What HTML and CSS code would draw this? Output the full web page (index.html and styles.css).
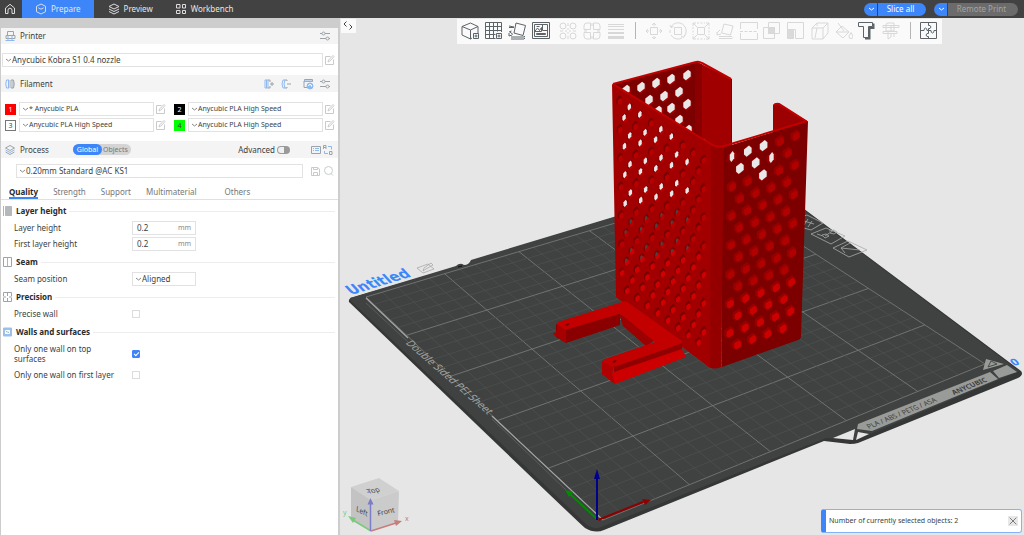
FILE: index.html
```html
<!DOCTYPE html>
<html lang="en">
<head>
    <meta charset="UTF-8">
    <meta name="viewport" content="width=device-width, initial-scale=1.0">
    <title>Untitled</title>
    <link rel="stylesheet" href="styles.css">
</head>
<body>

<header class="topbar">
    <nav class="nav">
        <a class="nav-item home" href="#home" aria-label="Home">
            <svg class="icon" viewBox="0 0 12 12"><path d="M1.500 5 6 1.300 10.500 5v5.500H8V7.200a2 2 0 0 0-4 0v3.300H1.500z"/></svg>
        </a>
        <a class="nav-item active" href="#prepare">
            <svg class="icon" viewBox="0 0 12 12"><path d="M6 1 10.500 3.300v5.400L6 11 1.500 8.700V3.300zM3.300 4.800 6 6.200l2.700-1.400"/></svg>
            Prepare
        </a>
        <a class="nav-item" href="#preview">
            <svg class="icon" viewBox="0 0 12 12"><path d="M6 1 11 3.500 6 6 1 3.500zM1 6l5 2.500L11 6M1 8.500 6 11l5-2.500"/></svg>
            Preview
        </a>
        <a class="nav-item" href="#workbench">
            <svg class="icon" viewBox="0 0 12 12"><path d="M1.500 1.500H5V5H1.500zM7.500 1.500h3V5h-3zM1.500 7.500H5v3H1.500zM7.500 7.500h3v3h-3z"/></svg>
            Workbench
        </a>
    </nav>
    <div class="actions">
        <div class="split">
            <button class="split-arrow" aria-label="Slice options"><svg class="chevron" viewBox="0 0 7 4"><path d="M1 1l2.500 2L6 1"/></svg></button>
            <button class="split-main">Slice all</button>
        </div>
        <div class="split">
            <button class="split-arrow" aria-label="Print options"><svg class="chevron" viewBox="0 0 7 4"><path d="M1 1l2.500 2L6 1"/></svg></button>
            <button class="split-main print" disabled>Remote Print</button>
        </div>
    </div>
</header>

<main class="main">
    <aside class="sidebar">
        <div class="strip"></div>

        <div class="bar first">
            <svg class="icon" viewBox="0 0 12 12"><path d="M3.500 5.500v-4h6v4M2 5.500h9v3H2z"/><path class="blue" d="M1.500 10.500h9M4 6v4M8 6v4"/></svg>
            <h2>Printer</h2>
            <span class="grow"></span>
            <button class="icon-btn" aria-label="Printer settings"><svg class="icon" viewBox="0 0 12 12"><path d="M1 3.500h2M6 3.500h5M1 8.500h6M10 8.500h1"/><circle cx="4.500" cy="3.500" r="1.500"/><circle cx="8.500" cy="8.500" r="1.500"/></svg></button>
        </div>

        <div class="row printer-row">
            <div class="combo wide">
                <svg class="chevron" viewBox="0 0 7 4"><path d="M1 1l2.500 2L6 1"/></svg>
                <select aria-label="Printer"><option>Anycubic Kobra S1 0.4 nozzle</option></select>
            </div>
            <button class="icon-btn" aria-label="Edit printer"><svg class="icon edit" viewBox="0 0 12 12"><path d="M9.500 5.500v5h-8v-8h5M4 8l.5-2L9 1.500 10 2.600 5.700 7.200z"/></svg></button>
        </div>

        <div class="bar">
            <svg class="icon" viewBox="0 0 12 12"><path class="blue" d="M4.500 2v8M2.500 2Q1 6 2.500 10H5V2z"/><path d="M7 2h2.500Q11 6 9.500 10H7zM9 2v8"/></svg>
            <h2>Filament</h2>
            <span class="grow"></span>
            <button class="icon-btn" aria-label="Add filament"><svg class="icon" viewBox="0 0 12 12"><path class="blue" d="M2 2h3v8H2zM3.500 2v8"/><path d="M5 2h2v2M5 10h2V8M7 6h4M9 4v4"/></svg></button>
            <button class="icon-btn" aria-label="Remove filament"><svg class="icon" viewBox="0 0 12 12"><path class="blue" d="M3 2Q1 6 3 10h2Q3 6 5 2z"/><path d="M5 2h2v1M5 10h2V9M7 6h4"/></svg></button>
            <button class="icon-btn sync" aria-label="Sync filament"><svg class="icon" viewBox="0 0 12 12"><path d="M1.500 3.500h9v-2h-8v2M2 4v5.500h3"/><path class="blue" d="M2 3h8"/><circle class="blue fill" cx="8" cy="8" r="3"/><path class="white" d="M6.500 8a1.500 1.500 0 0 1 3 0M9.500 7v1.500"/></svg></button>
            <button class="icon-btn" aria-label="Filament settings"><svg class="icon" viewBox="0 0 12 12"><path d="M1 3.500h2M6 3.500h5M1 8.500h6M10 8.500h1"/><circle cx="4.500" cy="3.500" r="1.500"/><circle cx="8.500" cy="8.500" r="1.500"/></svg></button>
        </div>

        <div class="filaments">
            <div class="filament">
                <span class="swatch red">1</span>
                <div class="combo"><svg class="chevron" viewBox="0 0 7 4"><path d="M1 1l2.500 2L6 1"/></svg><select aria-label="Filament 1"><option>* Anycubic PLA</option></select></div>
                <button class="icon-btn" aria-label="Edit filament 1"><svg class="icon edit" viewBox="0 0 12 12"><path d="M9.500 5.500v5h-8v-8h5M4 8l.5-2L9 1.500 10 2.600 5.700 7.200z"/></svg></button>
            </div>
            <div class="filament">
                <span class="swatch black">2</span>
                <div class="combo"><svg class="chevron" viewBox="0 0 7 4"><path d="M1 1l2.500 2L6 1"/></svg><select aria-label="Filament 2"><option>Anycubic PLA High Speed</option></select></div>
                <button class="icon-btn" aria-label="Edit filament 2"><svg class="icon edit" viewBox="0 0 12 12"><path d="M9.500 5.500v5h-8v-8h5M4 8l.5-2L9 1.500 10 2.600 5.700 7.200z"/></svg></button>
            </div>
            <div class="filament">
                <span class="swatch">3</span>
                <div class="combo"><svg class="chevron" viewBox="0 0 7 4"><path d="M1 1l2.500 2L6 1"/></svg><select aria-label="Filament 3"><option>Anycubic PLA High Speed</option></select></div>
                <button class="icon-btn" aria-label="Edit filament 3"><svg class="icon edit" viewBox="0 0 12 12"><path d="M9.500 5.500v5h-8v-8h5M4 8l.5-2L9 1.500 10 2.600 5.700 7.200z"/></svg></button>
            </div>
            <div class="filament">
                <span class="swatch green">4</span>
                <div class="combo"><svg class="chevron" viewBox="0 0 7 4"><path d="M1 1l2.500 2L6 1"/></svg><select aria-label="Filament 4"><option>Anycubic PLA High Speed</option></select></div>
                <button class="icon-btn" aria-label="Edit filament 4"><svg class="icon edit" viewBox="0 0 12 12"><path d="M9.500 5.500v5h-8v-8h5M4 8l.5-2L9 1.500 10 2.600 5.700 7.200z"/></svg></button>
            </div>
        </div>

        <div class="bar process">
            <svg class="icon" viewBox="0 0 12 12"><path d="M6 1.500 10.500 4 6 6.500 1.500 4z"/><path class="blue" d="M1.500 6 6 8.500 10.500 6"/><path d="M1.500 8 6 10.500 10.500 8"/></svg>
            <h2>Process</h2>
            <div class="pill">
                <button class="on">Global</button>
                <button>Objects</button>
            </div>
            <span class="grow"></span>
            <label class="advanced">Advanced <input type="checkbox" class="switch"></label>
            <button class="icon-btn" aria-label="Compare presets"><svg class="icon" viewBox="0 0 12 12"><path d="M1.500 2.500h9v7h-9z"/><path class="blue" d="M3 4.500h1M5 4.500h4M3 6.500h1M5 6.500h4"/></svg></button>
            <button class="icon-btn" aria-label="Translate"><svg class="icon" viewBox="0 0 12 12"><path d="M1.500 5V1.500H4V5M1.500 3.500H4M7.500 7.500H10v3H7.500z"/><path class="blue" d="M9.500 5.500v-3H6M2.500 7v2.500H6"/></svg></button>
        </div>

        <div class="row preset-row">
            <div class="combo wide">
                <svg class="chevron" viewBox="0 0 7 4"><path d="M1 1l2.500 2L6 1"/></svg>
                <select aria-label="Process preset"><option>0.20mm Standard @AC KS1</option></select>
            </div>
            <button class="icon-btn" aria-label="Save preset"><svg class="icon edit" viewBox="0 0 12 12"><path d="M1.500 2.500h6L9.500 4v6.500h-8zM3.500 2.500v2h4v-2M3.500 10.500v-3h4v3"/></svg></button>
            <button class="icon-btn" aria-label="Search"><svg class="icon edit" viewBox="0 0 12 12"><circle cx="5.500" cy="5.500" r="4"/><path d="M8 8.500 10 10.500"/></svg></button>
        </div>

        <nav class="tabs">
            <a class="tab current" href="#quality">Quality</a>
            <a class="tab" href="#strength">Strength</a>
            <a class="tab" href="#support">Support</a>
            <a class="tab" href="#multimaterial">Multimaterial</a>
            <a class="tab others" href="#others">Others</a>
        </nav>

        <form class="settings">
            <section>
                <h3><svg class="icon" viewBox="0 0 12 12"><path class="slab" d="M4.500 1.500h6v9h-6z"/><path class="blue" d="M2.500 1v10"/></svg>Layer height</h3>
                <div class="field">
                    <label for="layerHeight">Layer height</label>
                    <span class="number"><input type="text" id="layerHeight" value="0.2"><span>mm</span></span>
                </div>
                <div class="field">
                    <label for="firstLayerHeight">First layer height</label>
                    <span class="number"><input type="text" id="firstLayerHeight" value="0.2"><span>mm</span></span>
                </div>
            </section>
            <section>
                <h3><svg class="icon" viewBox="0 0 12 12"><path d="M2.500 1.500h8v9h-8z"/><path class="blue" d="M6.500 1.500v9"/></svg>Seam</h3>
                <div class="field">
                    <label for="seamPosition">Seam position</label>
                    <div class="combo"><svg class="chevron" viewBox="0 0 7 4"><path d="M1 1l2.500 2L6 1"/></svg><select id="seamPosition"><option>Aligned</option></select></div>
                </div>
            </section>
            <section>
                <h3><svg class="icon" viewBox="0 0 12 12"><path d="M2.500 5V1.500H10.500V5M2.500 7v3.500H10.500V7M6.500 1.500V5M6.500 7v3.500M2 6h3M8 6h3"/></svg>Precision</h3>
                <div class="field">
                    <label for="preciseWall">Precise wall</label>
                    <input type="checkbox" class="check" id="preciseWall">
                </div>
            </section>
            <section>
                <h3><svg class="icon" viewBox="0 0 12 12"><path class="wall" d="M2.500 2h8v8h-8z"/><path class="white" d="M4.500 4.500h4v3h-4zM4.500 7.500l4-3"/></svg>Walls and surfaces</h3>
                <div class="field tall">
                    <label for="oneWallTop">Only one wall on top surfaces</label>
                    <input type="checkbox" class="check" id="oneWallTop" checked>
                </div>
                <div class="field">
                    <label for="oneWallFirst">Only one wall on first layer</label>
                    <input type="checkbox" class="check" id="oneWallFirst">
                </div>
            </section>
        </form>
    </aside>

    <div class="viewport">
        <svg class="scene" viewBox="340 18 684 517" preserveAspectRatio="xMidYMid slice">
            <!-- build plate -->
            <path fill="#353736" d="M349 302 Q348 298 354 297 L456 267 Q460 263 464 266 Q469 266 471 261 L760 176 L1021 371 Q1024 375 1018 378 L858 443 Q855 444 850 444 L824 441 L604 530 Q595 534 585 528 Q582 526 349 302z"/>
            <path fill="#3f4240" d="M350 298 L456 266 Q460 262 464 265 Q469 265 471 260 L756 174 L1019 371 L856 440 L826 438 L601 527 Q594 530 587 525 L351 301z"/>
            <g id="grid" fill="none"></g>
            <path fill="none" stroke="#a4a6a4" stroke-width="1.200" d="M366 298 408 338M492 416 603 520"/>
            <path fill="none" stroke="#6b6d6b" stroke-width=".6" d="M366 303 408 342M492 419 566 490"/>
            <path fill="none" stroke="#111" d="M458 267l4-1"/>
            <text class="sheet" transform="translate(405 343) rotate(41) skewX(-24)">Double Sided PEI Sheet</text>

            <!-- front label strip -->
            <path fill="#999b99" d="M858 424 990 372 998 379 872 431 857 429zM993 371 1007 365 1017 372 999 378zM983 370 986 359 1004 364z"/>
            <path fill="#e6e6e6" d="M833 438 855 429 853 440zM858 432 869 434 856 440z"/>
            <path fill="none" stroke="#4a4c4a" d="M988 367 991 361 997 364z"/>
            <text class="strip-text" transform="translate(869 429) rotate(-22) skewX(18)">PLA / ABS / PETG / ASA</text>
            <text class="strip-text brand" transform="translate(954 395) rotate(-22) skewX(18)">ANYCUBIC</text>

            <!-- plate name and plate buttons -->
            <text class="plate-name" transform="translate(351 295) rotate(-17) skewX(26)">Untitled</text>
            <g fill="none" stroke="#aaa" stroke-width=".8">
                <path d="M417 268 428 264 434 269 423 273zM423 271l1-3 7-5 2 2-7 4z"/>
                <path d="M800 217 807 215 823 223 811 230 800 227zM804 221l10 3M808 219l-4 6M812 221l-4 6"/>
                <path d="M826 228 845 236 831 244 811 234zM817 234l6 2 2 2 4-2-3-2-4 1M825 236l9-6M829 231l5-1 3 2-3 2-4-1"/>
                <path d="M848 241 867 250 849 257 833 248zM841 248 860 250M841 248 850 243M841 248 845 253"/>
            </g>
            <text class="plate-number" transform="translate(1014 366) rotate(-17) skewX(26)">0</text>

            <!-- perforated box -->
            <path fill="#7c0000" d="M613 84 698 61 704 140 720 150 716 200 620 130z"/>
            <g id="backHoles" fill="#e8e8e8"></g>
            <path fill="#a00000" d="M697 62 732 79V150L716 150 697 132z"/>
            <path fill="#8a0000" d="M695 62 702 64V140L695 130z"/>
            <path fill="none" stroke="#c00000" stroke-width="2" stroke-linejoin="round" d="M613 84 696 62Q699 61 702 63L731 79"/>
            <path fill="none" stroke="#800000" d="M731.500 79V144"/>
            <path fill="#9c0000" d="M773 105Q775 102 779 104L807 121 800 128 773 134z"/>
            <path fill="none" stroke="#c00000" stroke-width="2" d="M774 105Q776 103 779 104L806 121"/>
            <path fill="#a20000" d="M612 84 716 147 713 368Q709 369 706 365L616 297z"/>
            <path fill="#7c0000" d="M722 148 808 121 801 336Q801 339 798 340L722 367z"/>
            <path fill="#940000" d="M711 146 724 147 721 367Q714 370 710 367z"/>
            <g id="leftHoles"></g>
            <g id="rightHoles"></g>
            <path fill="none" stroke="#c20000" stroke-width="2" stroke-linejoin="round" d="M613 84 711 144Q717 148 724 146L807 121"/>

            <!-- bracket -->
            <path fill="#8a0000" d="M566 329 620 313 620 325 566 343 556 337V324z"/>
            <path fill="#a60000" d="M557 324 566 329V343L553 334 557 331z"/>
            <path fill="#9c0000" d="M619 313 657 339 646 346 623 326z"/>
            <path fill="#900000" d="M614 366 682 342V352L614 376z"/>
            <path fill="#cc0000" d="M611 373 682 349 686 357 615 384 602 374V362z"/>
            <path fill="#b00000" d="M602 361 614 366 612 374 615 384 602 374z"/>
            <path fill="#c20000" d="M557 324Q557 322 561 321L622 302Q626 300 630 304L682 341Q682 343 680 344L617 366Q614 367 611 366L603 362Q602 360 605 359L655 342 622 315Q619 313 616 315L568 329Q565 330 562 328z"/>
            <path fill="#7a0000" d="M565 325l3-2 2 1-3 2zM612 362l3-2 2 1-3 2z"/>

            <!-- origin axes -->
            <g stroke-width="2" fill="none">
                <path stroke="#8e0000" d="M598 520 643 502"/>
                <path stroke="#008c00" d="M598 520 570 494"/>
                <path stroke="#00008c" d="M597 520V476"/>
            </g>
            <path fill="#8e0000" d="M642 499 651 500 645 505z"/>
            <path fill="#008c00" d="M565 490 573 492 569 497z"/>
            <path fill="#00008c" d="M597 469 600 479H594z"/>

            <!-- view cube -->
            <path fill="#d0d0d0" d="M351 487 379 478 399 491 371 500z"/>
            <path fill="#c3c3c3" d="M351 487 371 500V531L351 520z"/>
            <path fill="#cbcbcb" d="M371 500 399 491 398 522 371 531z"/>
            <g class="cube-text">
                <text transform="translate(356 511) rotate(27) skewX(20)">Left</text>
                <text transform="translate(378 516) rotate(-13)">Front</text>
                <text transform="translate(369 494) rotate(-14) skewX(20)">Top</text>
                <text class="x" x="405" y="521">x</text>
                <text class="y" x="343" y="515">y</text>
                <text class="z" x="367" y="493">z</text>
            </g>
            <g stroke-width="1.500" fill="none">
                <path stroke="#c97c7c" d="M371 531 396 523"/>
                <path stroke="#7cc97c" d="M371 531 353 520"/>
                <path stroke="#7c7cc9" d="M370.500 531V502"/>
            </g>
            <path fill="#c97c7c" d="M394 520 402 521 396 526z"/>
            <path fill="#7cc97c" d="M348 516 356 518 353 523z"/>
            <path fill="#7c7cc9" d="M370.500 498 373.500 504.500H367.500z"/>
        </svg>

        <button class="collapse" aria-label="Collapse sidebar"><svg class="icon" viewBox="0 0 12 12"><path d="M4.500 1.500 2 4l2.500 2.500M7.500 4.500 10 7l-2.500 2.500"/></svg></button>

        <div class="toolbar" role="toolbar" aria-label="Edit tools">
            <div class="tools tools-add">
                <button aria-label="Add object"><svg viewBox="0 0 18 18"><path d="M11 16 9.500 17 1 13V4.500L9.500 1 17 4.500V11M1 4.500 9.500 8 17 4.500M9.500 8v9M12.500 11.500h5v5h-5zM15 12.500v3M13.500 14h3"/></svg></button>
                <button aria-label="Add plate"><svg viewBox="0 0 18 18"><path d="M16.500 10V.5H.5v16h10M4.500.5v16M8.500.5v16M12.500.5v9M.5 4.500h16M.5 8.500h16M.5 12.500h10M11.500 11.500h5v5h-5zM14 12.500v3M12.500 14h3"/></svg></button>
                <button aria-label="Auto orient"><svg viewBox="0 0 18 18"><path d="M8 1l9.500 2.500-2.500 10-9-2.500zM1 4l5 1M1 5.500h5M1 10l2.500-1M2 10l3 2.500M1 11v3l3-1M3 15h13.500v-1M3 17h13l1-1"/></svg></button>
                <button aria-label="Arrange"><svg viewBox="0 0 18 18"><path d="M.5.5h17v16H.5zM2.500 2.500h13v12h-13zM4.500 4.500h3M10.500 2.500v6h5M3 9l2.500-3 2 2.500 2-3v4H3M4.500 11.500h9v1h-9z"/></svg></button>
            </div>
            <div class="tools tools-split">
                <button disabled aria-label="Split to objects"><svg viewBox="0 0 18 18"><circle cx="4" cy="4" r="3"/><circle cx="14" cy="4" r="3"/><circle cx="4" cy="14" r="3"/><circle cx="14" cy="14" r="3"/><path d="M9 1v3M9 6v2M9 10v2M9 14v3M1 9h3M6 9h2M10 9h2M14 9h3"/></svg></button>
                <button disabled aria-label="Split to parts"><svg viewBox="0 0 18 18"><path d="M7.500 1v6.500H1V4a3 3 0 0 1 3-3zM10.500 1H14a3 3 0 0 1 3 3v3.500h-6.500zM1 10.500h6.500V17H4a3 3 0 0 1-3-3zM10.500 10.500H17V14a3 3 0 0 1-3 3h-3.500zM9 1v3M9 14v3M1 9h3M14 9h3"/></svg></button>
                <button disabled aria-label="Variable layer height"><svg viewBox="0 0 18 18"><path d="M1 2.500h16M1 4.500h16M1 7.500h16M1 10.500h16M1 11.500h16M1 14.500h16M1 15.500h16M1 16.500h16"/></svg></button>
            </div>
            <span class="sep"></span>
            <div class="tools tools-edit">
                <button disabled aria-label="Move"><svg viewBox="0 0 18 18"><path d="M5.500 5.500h7v7h-7zM9 1v3M7 3l2-2 2 2M9 14v3M7 15l2 2 2-2M1 9h3M3 7 1 9l2 2M14 9h3M15 7l2 2-2 2"/></svg></button>
                <button disabled aria-label="Rotate"><svg viewBox="0 0 18 18"><path d="M5.500 5.500h7v7h-7zM2 5a8 8 0 0 1 13-1.500 8 8 0 0 1 0 11M16 13l-1.500 2.500L12 14M13 16A8 8 0 0 1 2 13M1 8v3M1 3l1 2.500 2.500-1"/></svg></button>
                <button disabled aria-label="Scale"><svg viewBox="0 0 18 18"><path d="M5.500 5.500h7v7h-7zM1 4V1h3M14 1h3v3M17 14v3h-3M4 17H1v-3M1 1l4 4M17 1l-4 4M1 17l4-4M17 17l-4-4"/><path stroke-dasharray="2 1.500" d="M5 1h8M5 17h8M1 5v8M17 5v8"/></svg></button>
                <button disabled aria-label="Lay on face"><svg viewBox="0 0 18 18"><path d="M8 2l9 2-2.500 9-9-2zM1 11l3-3M1 10v3l4-1M3 14.500h13M3 16.500h13l1-1"/></svg></button>
                <button disabled aria-label="Cut"><svg viewBox="0 0 18 18"><path d="M.5 7V.5h17V7M.5 11v6.500h17V11"/><path stroke-dasharray="3 1.500" d="M0 9.500h18"/></svg></button>
                <button disabled aria-label="Mesh boolean"><svg viewBox="0 0 18 18"><path d="M5.500.5h11v11h-11zM.5 5.500h11v11H.5z"/><path class="solid" d="M5.500 5.500h6v6h-6z"/></svg></button>
                <button disabled aria-label="Support painting"><svg viewBox="0 0 18 18"><path d="M.5.5h16v16h-8v-9h-8z"/><path class="solid" d="M.5 7.500h6v9h-6z"/></svg></button>
                <button disabled aria-label="Seam painting"><svg viewBox="0 0 18 18"><path d="M1 6 6 1h11v10l-5 6H1zM1 6h11v11M12 6l5-5M6 1v3M4 16 6 6"/></svg></button>
                <button disabled aria-label="Colour painting"><svg viewBox="0 0 18 18"><path d="M7 4l7 6-6 6-7-6zM1 10h13M3 1l6 8M16 10.500q-4 6 0 6t0-6z"/></svg></button>
                <button aria-label="Text"><svg viewBox="0 0 18 18"><path d="M.5.5h14v4h-4v11h-5v-11h-5z"/><path class="bold" d="M15.500 1.500v4.500h-4v10.500H7"/></svg></button>
                <button disabled aria-label="Measure"><svg viewBox="0 0 18 18"><path d="M1 3.500h16v2H1zM4 3Q4 1 6 1h6v8H4zM1 9.500h14v2H1zM6 9v8l3-2v-3M9 4v5M12 12v3"/></svg></button>
            </div>
            <span class="sep"></span>
            <div class="tools">
                <button aria-label="Assembly view"><svg viewBox="0 0 18 18"><path d="M.5.5h16v16H.5zM8.500.5v3H10q2 1.500 0 3H8.500v2H7q0-2.500-1.500-2.500T4 8.500H.5M8.500 16.500v-2H7q-2-1.500 0-3h1.500v-3H11q0 2.500 1.500 2.500T14 8.500h2.500"/></svg></button>
            </div>
        </div>

        <div class="toast" role="status">
            <span>Number of currently selected objects: 2</span>
            <button aria-label="Close"><svg class="icon" viewBox="0 0 12 12"><path d="M2 2l8 8M10 2l-8 8"/></svg></button>
        </div>
    </div>
</main>

<script src="scene.js"></script>
</body>
</html>
```
FILE: styles.css
```css
* {
    box-sizing: border-box;
}
body {
    margin: 0;
    height: 100vh;
    display: flex;
    flex-direction: column;
    overflow: hidden;
    font-family: "Noto Sans", "Liberation Sans", sans-serif;
    font-size: 8px;
    line-height: 10px;
    color: #3a3f43;
    background: #e6e6e6;
}
button, input, select {
    font: inherit;
    color: inherit;
    margin: 0;
    padding: 0;
    border: none;
    background: none;
}
select {
    appearance: none;
    flex: 1;
    min-width: 0;
    height: 12px;
}
h2, h3 {
    margin: 0;
    font-size: 8px;
    font-weight: normal;
}
svg {
    display: block;
}
.icon {
    width: 12px;
    height: 12px;
    flex: none;
    fill: none;
    stroke: #9da4a9;
    stroke-width: 1;
}
.icon .blue {
    stroke: #8db9f0;
}
.icon .fill {
    fill: #8db9f0;
}
.icon .white {
    stroke: #fff;
}
.icon .slab {
    fill: #b5b8ba;
    stroke: #b5b8ba;
}
.icon .wall {
    fill: #9cc0e6;
    stroke: #9cc0e6;
}
.icon.edit {
    stroke: #c8cbcd;
}
.chevron {
    width: 7px;
    height: 4px;
    flex: none;
    fill: none;
    stroke: #888;
    stroke-width: 1;
}
.icon-btn {
    flex: none;
}
.grow {
    flex: 1;
}

/* top bar */
.topbar {
    flex: none;
    height: 18px;
    display: flex;
    justify-content: space-between;
    background: #424242;
    color: #e6e6e6;
}
.nav, .actions, .split {
    display: flex;
}
.nav-item {
    display: flex;
    align-items: center;
    gap: 4px;
    padding: 0 8px 0 14px;
    color: inherit;
    text-decoration: none;
}
.nav-item .icon {
    stroke: #dcdcdc;
}
.nav-item.home {
    padding: 0 6px 0 4px;
}
.nav-item.active {
    padding: 0 13px;
    background: #3c86fa;
}
.actions {
    align-items: center;
    gap: 8px;
    padding-right: 6px;
}
.split {
    gap: 1px;
}
.split button {
    height: 13px;
    background: #3c86fa;
    color: #fff;
}
.split .split-arrow {
    width: 13px;
    padding-left: 4px;
    border-radius: 7px 0 0 7px;
}
.split .chevron {
    stroke: #fff;
}
.split .split-main {
    width: 48px;
    padding-right: 3px;
    border-radius: 0 7px 7px 0;
}
.split .print {
    width: 70px;
    background: #6b6b6b;
    color: #a3a3a3;
}

/* sidebar */
.main {
    flex: 1;
    min-height: 0;
    display: flex;
}
.sidebar {
    flex: none;
    width: 340px;
    border-left: 1px solid #ccc;
    border-right: 2px solid #cdcdcd;
    background: #fff;
}
.strip {
    height: 10px;
    background: #cdcdcd;
}
.bar {
    display: flex;
    align-items: center;
    height: 17px;
    padding: 0 7px 0 3px;
    background: #f4f4f4;
}
.bar.first {
    height: 16px;
}
.bar h2 {
    margin-left: 4px;
}
.bar .icon-btn {
    margin-left: 5px;
}
.bar .sync {
    margin-left: 10px;
}
.row {
    display: flex;
    align-items: center;
    gap: 1px;
}
.combo {
    display: flex;
    align-items: center;
    flex: 1;
    min-width: 0;
    height: 14px;
    padding-left: 2px;
    border: 1px solid #e2e2e2;
}
.printer-row {
    padding: 9px 2px 8px 1px;
}
.filaments {
    display: grid;
    grid-template-columns: 1fr 1fr;
    gap: 2px 7px;
    padding: 10px 2px 9px 4px;
    font-size: 7px;
}
.filament {
    display: flex;
    align-items: center;
    gap: 1px;
}
.swatch {
    width: 11px;
    height: 11px;
    margin-right: 2px;
    border: 1px solid #777;
    line-height: 9px;
    text-align: center;
}
.swatch.red {
    background: #f00;
    border-color: #f00;
    color: #fff;
}
.swatch.black {
    background: #000;
    border-color: #000;
    color: #fff;
}
.swatch.green {
    background: #0f0;
    border-color: #0f0;
}
.pill {
    display: flex;
    margin-left: 24px;
    border-radius: 6px;
    background: #d4d4d4;
    color: #777;
    font-size: 7px;
}
.pill button {
    height: 11px;
    padding: 0 3px 0 1px;
}
.pill .on {
    padding: 0 4px;
    border-radius: 6px;
    background: #3c86fa;
    color: #fff;
}
.advanced {
    display: flex;
    align-items: center;
    gap: 2px;
    margin-right: 20px;
}
.switch {
    appearance: none;
    width: 13px;
    height: 8px;
    border: 1px solid #9a9a9a;
    border-right-width: 6px;
    border-radius: 4px;
    background: #f0f0f0;
}
.process {
    padding-right: 4px;
}
.bar.process .icon-btn {
    margin-left: 0;
}
.preset-row {
    padding: 6px 3px 7px 15px;
}
.preset-row .combo {
    margin-right: 6px;
}

/* tabs */
.tabs {
    display: flex;
    gap: 15px;
    padding: 0 8px;
    border-bottom: 1px solid #e0e0e0;
    color: #777;
}
.tab {
    height: 14px;
    line-height: 13px;
    color: inherit;
    text-decoration: none;
}
.tab.current {
    border-bottom: 2px solid #3c86fa;
    color: #262b30;
    font-weight: bold;
}
.tab.others {
    margin-left: 13px;
}

/* settings */
.settings {
    padding: 2px 3px 0 0;
}
section {
    padding-bottom: 1px;
}
h3 {
    display: flex;
    align-items: center;
    gap: 3px;
    height: 18px;
    font-weight: bold;
    color: #262b30;
}
h3::after {
    content: "";
    flex: 1;
    height: 1px;
    background: #ededed;
}
.field {
    display: flex;
    align-items: center;
    height: 16px;
    padding-left: 13px;
}
.field.tall {
    height: 26px;
}
.field label {
    width: 118px;
}
.field.tall label {
    padding-right: 24px;
}
.field .combo {
    flex: none;
    width: 64px;
}
.number {
    display: flex;
    align-items: center;
    width: 64px;
    height: 14px;
    padding: 0 4px;
    border: 1px solid #e2e2e2;
}
.number input {
    flex: 1;
    min-width: 0;
}
.number span {
    font-size: 7px;
    color: #888;
}
.check {
    appearance: none;
    width: 8px;
    height: 8px;
    border: 1px solid #dcdcdc;
}
.check:checked {
    border-color: #3c86fa;
    border-radius: 1px;
    background: #3c86fa;
}
.check:checked::after {
    content: "";
    display: block;
    width: 4px;
    height: 2px;
    margin: 1px;
    border: solid #fff;
    border-width: 0 0 1px 1px;
    transform: rotate(-45deg);
}

/* 3D view */
.viewport {
    position: relative;
    flex: 1;
    min-width: 0;
    background: #e6e6e6;
}
.scene {
    width: 100%;
    height: 100%;
}
.sheet {
    font: 10px "Noto Sans", sans-serif;
    fill: #a0a2a0;
}
.strip-text {
    font: 7px "Noto Sans", sans-serif;
    fill: #3f4240;
}
.brand {
    font-weight: bold;
}
.plate-name, .plate-number {
    font: bold 14px "DejaVu Sans", sans-serif;
    fill: #3c86fa;
}
.plate-number {
    font-size: 10px;
}
.cube-text {
    font: 7px "Noto Sans", sans-serif;
    fill: #444;
}
.cube-text .x {
    fill: #c97c7c;
}
.cube-text .y {
    fill: #7cc97c;
}
.cube-text .z {
    fill: #7c7cc9;
}
.collapse {
    position: absolute;
    top: 1px;
    left: 1px;
    width: 15px;
    height: 14px;
    padding-left: 1px;
    background: #fafafa;
}
.collapse .icon {
    stroke: #444;
}
.toolbar {
    position: absolute;
    top: 1px;
    left: 117px;
    display: flex;
    align-items: center;
    height: 25px;
    padding: 0 4px 2px;
    background: #fafafa;
}
.tools {
    display: flex;
    justify-content: space-between;
}
.tools svg {
    width: 18px;
    height: 18px;
    fill: none;
    stroke: #5c6468;
    stroke-width: 1;
}
.tools button:disabled svg {
    stroke: #d8d8d8;
}
.tools .solid {
    fill: #dadada;
}
.tools .bold {
    stroke-width: 2;
}
.tools-add {
    width: 89px;
    margin-right: 9px;
}
.tools-split {
    width: 66px;
}
.tools-edit {
    width: 255px;
}
.sep {
    width: 1px;
    height: 17px;
    margin: 0 9px 0 10px;
    background: #b5b5b5;
}
.toast {
    position: absolute;
    right: 2px;
    bottom: 2px;
    display: flex;
    align-items: center;
    justify-content: space-between;
    width: 201px;
    height: 24px;
    padding: 0 3px;
    border: 1px solid #86b3f5;
    border-left: 5px solid #3c86fa;
    border-radius: 3px;
    background: #fff;
    font-size: 7px;
}
.toast button {
    background: #e8e8e8;
}
.toast .icon {
    width: 10px;
    height: 10px;
    stroke: #666;
}
```
FILE: scene.js
```js
const NS = "http://www.w3.org/2000/svg";

function add(parent, tag, attrs) {
    const el = document.createElementNS(NS, tag);
    for (const key in attrs) el.setAttribute(key, attrs[key]);
    parent.appendChild(el);
}

// plate corners on screen: origin, +x, +x+y, +y
const corners = [[603, 520], [985, 364], [720, 192], [366, 297]];

// unit square -> screen, with perspective
function project(u, v) {
    const [[x0, y0], [x1, y1], [x2, y2], [x3, y3]] = corners;
    const dx1 = x1 - x2, dx2 = x3 - x2, sx = x0 - x1 + x2 - x3;
    const dy1 = y1 - y2, dy2 = y3 - y2, sy = y0 - y1 + y2 - y3;
    const det = dx1 * dy2 - dx2 * dy1;
    const g = (sx * dy2 - dx2 * sy) / det;
    const h = (dx1 * sy - sx * dy1) / det;
    const w = g * u + h * v + 1;
    return [
        ((x1 - x0 + g * x1) * u + (x3 - x0 + h * x3) * v + x0) / w,
        ((y1 - y0 + g * y1) * u + (y3 - y0 + h * y3) * v + y0) / w
    ];
}

const grid = document.getElementById("grid");
for (let i = 0; i <= 25; i++) {
    const t = i / 25;
    const major = i % 5 === 0;
    const stroke = major ? "#757775" : "#4f514f";
    const width = major ? 0.9 : 0.7;
    add(grid, "path", { d: `M${project(t, 0)}L${project(t, 1)}`, stroke, "stroke-width": width });
    add(grid, "path", { d: `M${project(0, t)}L${project(1, t)}`, stroke, "stroke-width": width });
}

// hexagon that leans with the wall it is cut in
function hex(parent, x, y, rx, ry, fill) {
    const d = `M${x + rx * 0.3} ${y - ry}L${x + rx} ${y - ry * 0.6}V${y + ry * 0.3}L${x - rx * 0.3} ${y + ry}L${x - rx} ${y + ry * 0.6}V${y - ry * 0.3}z`;
    add(parent, "path", { d, fill });
}

// back wall, seen through the open top
const back = document.getElementById("backHoles");
[[626, 90], [641, 87], [656, 83], [671, 79], [687, 75], [649, 100], [664, 96], [679, 92],
 [671, 108], [687, 104], [679, 120], [658, 111], [688, 130]].forEach(([x, y]) => {
    hex(back, x + 0.8, y + 1, 4, 5.8, "#a80000");
    hex(back, x, y, 3.7, 5.3, "#e8e8e8");
});

// left wall: 17 staggered columns of 7
const left = document.getElementById("leftHoles");
for (let i = 0; i < 17; i++) {
    for (let r = 0; r < 7; r++) {
        const x = 619 + 5.25 * i + (r * (16 - i)) / 40;
        const y = 100 + 3.7 * i + (i % 2 ? 14.3 : 0) + 28.6 * r;
        hex(left, x, y, 2.7, 5, "#7c0000");
        hex(left, x + 0.8, y + 1.5, 2.2, 3.6, y > 250 ? "#d00000" : "#b80000");
        if (i % 3 && i < 14 && y < 262) {
            hex(left, x - 0.2, y - 0.5, y < 210 ? 1.7 : 1, y < 210 ? 3.6 : 2.4, y < 210 ? "#e8e8e8" : "#4b4342");
        }
    }
}

// right wall: 9 staggered columns of 7
const right = document.getElementById("rightHoles");
const open = ["0,0", "1,0", "2,0", "3,0", "4,0", "4,1", "5,0"];
for (let i = 0; i < 9; i++) {
    for (let r = 0; r < 7; r++) {
        const x = 732 + 7.9 * i - r * (0.5 + i * 0.05);
        const y = 157 - 2.7 * i + (i % 2 ? 14.5 : 0) + 29.2 * r;
        hex(right, x, y, 4.7, 6.2, "#960000");
        if (open.includes(`${i},${r}`)) {
            hex(right, x, y - 0.5, i % 5 ? 3.8 : 2.2, 5.6, "#e8e8e8");
        } else {
            hex(right, x + 1, y + 1, 3.4, 4.6, r > 4 ? "#cc0000" : "#b00000");
        }
    }
}
```
